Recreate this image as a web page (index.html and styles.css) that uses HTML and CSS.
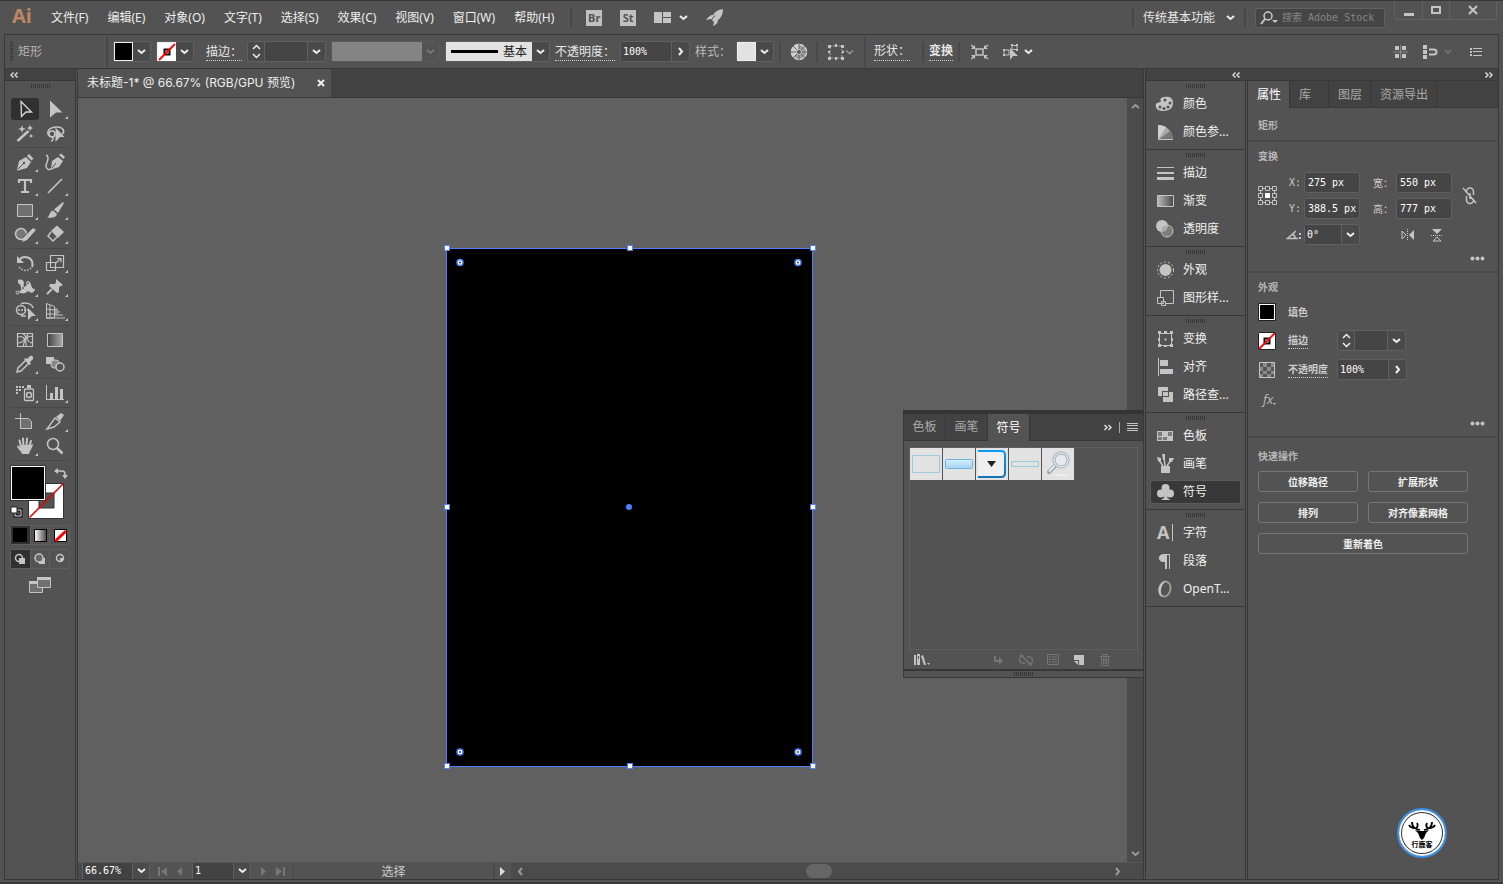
FILE: index.html
```html
<!DOCTYPE html>
<html lang="zh-CN">
<head>
<meta charset="utf-8">
<title>未标题-1* @ 66.67% (RGB/GPU 预览)</title>
<link rel="stylesheet" href="styles.css">
</head>
<body>
<svg class="defs" aria-hidden="true">
  <defs>
    <linearGradient id="g-dark"><stop offset="0" stop-color="#444"/><stop offset="1" stop-color="#aaa"/></linearGradient>
    <linearGradient id="g-light"><stop offset="0" stop-color="#bbb"/><stop offset="1" stop-color="#484848"/></linearGradient>
    <linearGradient id="g-white"><stop offset="0" stop-color="#fff"/><stop offset="1" stop-color="#4a4444"/></linearGradient>
    <linearGradient id="g-blue" x2="0" y2="1"><stop offset="0" stop-color="#d5effc"/><stop offset="1" stop-color="#a3d3f2"/></linearGradient>
    <linearGradient id="g-edge" x2="0" y2="1"><stop offset="0" stop-color="#0a9cf5"/><stop offset="1" stop-color="#1273b5"/></linearGradient>
    <symbol id="chev" viewBox="0 0 9 6"><path d="M1 1l3.500 3L8 1" fill="none" stroke="currentColor" stroke-width="2"/></symbol>
    <symbol id="spin" viewBox="0 0 9 15"><path d="M1 5l3.500-3.500L8 5M1 10l3.500 3.500L8 10" fill="none" stroke="currentColor" stroke-width="1.500"/></symbol>
    <symbol id="right" viewBox="0 0 6 9"><path d="M1 1l3 3.500L1 8" fill="none" stroke="currentColor" stroke-width="2"/></symbol>
    <symbol id="dbl" viewBox="0 0 9 6"><path d="M3.500.5L1 3l2.500 2.500M7.500.5L5 3l2.500 2.500" fill="none" stroke="currentColor" stroke-width="1.500"/></symbol>
    <symbol id="more" viewBox="0 0 3 3"><path d="M3 0v3H0z"/></symbol>
    <symbol id="nofill" viewBox="0 0 18 18"><rect width="18" height="18" fill="#fff"/><rect x="6.500" y="6.500" width="5" height="5" fill="#fff" stroke="#111" stroke-width="2"/><path d="M1 17L17 1" stroke="#f00" stroke-width="1.800"/></symbol>
  </defs>
</svg>

<div class="app">
  <header class="titlebar">
    <span class="logo">Ai</span>
    <nav class="menu">
      <button>文件(F)</button><button>编辑(E)</button><button>对象(O)</button><button>文字(T)</button><button>选择(S)</button><button>效果(C)</button><button>视图(V)</button><button>窗口(W)</button><button>帮助(H)</button>
    </nav>
    <span class="bar"></span>
    <div class="launch">
      <button class="badge">Br</button>
      <button class="badge">St</button>
      <button aria-label="排列文档"><svg width="34" height="14" viewBox="0 0 34 14"><path d="M0 1h8v11H0zM9 1h8v5H9zM9 7h8v5H9z"/><path d="M26 5l3.500 3L33 5" fill="none" stroke="#eee" stroke-width="2"/></svg></button>
      <button aria-label="GPU"><svg width="18" height="18" viewBox="0 0 18 18"><path d="M17 0c-5 .5-8 2.500-10 6C4 6 2 8 0 11l5-1 3 3-1 4c3-1 5-3 5-6 3-2 5-6 5-11z"/><path d="M4 12.500l5-6M1 16l3-3" stroke="#535353" fill="none"/></svg></button>
    </div>
    <div class="title-right">
      <span class="bar"></span>
      <label class="workspace"><select aria-label="工作区"><option>传统基本功能</option></select><svg width="9" height="6"><use href="#chev"/></svg></label>
      <span class="bar"></span>
      <label class="search"><svg width="18" height="14" viewBox="0 0 18 14"><circle cx="8" cy="5" r="4" fill="none" stroke="#ccc" stroke-width="1.500"/><path d="M5 8l-4 5" stroke="#ccc" stroke-width="2"/><path d="M12 9h6l-3 3z"/></svg><input type="text" aria-label="搜索" placeholder="搜索 Adobe Stock"></label>
      <div class="winbtns">
        <button aria-label="最小化"><svg width="12" height="12"><path d="M1 9h10v3H1z"/></svg></button>
        <button aria-label="最大化"><svg width="12" height="12"><path d="M2 3h8v6H2z" fill="none" stroke="#c4c4c4" stroke-width="2"/></svg></button>
        <button aria-label="关闭"><svg width="12" height="12"><path d="M2 2l8 8M10 2l-8 8" stroke="#c4c4c4" stroke-width="2"/></svg></button>
      </div>
    </div>
  </header>

  <section class="control">
    <span class="vgrip"></span>
    <span class="objname">矩形</span>
    <span class="bar tall"></span>
    <div class="combo"><button class="sw black" aria-label="填色"></button><button class="dd" aria-label="填色选项"><svg width="9" height="6"><use href="#chev"/></svg></button></div>
    <div class="combo"><button class="sw" aria-label="描边颜色"><svg width="18" height="18"><use href="#nofill"/></svg></button><button class="dd" aria-label="描边选项"><svg width="9" height="6"><use href="#chev"/></svg></button></div>
    <label class="dotted w-stroke" for="sw">描边：</label>
    <div class="combo"><button class="sp" aria-label="增减"><svg width="9" height="15"><use href="#spin"/></svg></button><input id="sw" class="w43" type="text"><button class="dd" aria-label="粗细"><svg width="9" height="6"><use href="#chev"/></svg></button></div>
    <div class="combo off"><span class="profile"></span><button class="dd" aria-label="配置文件" disabled><svg width="9" height="6"><use href="#chev"/></svg></button></div>
    <div class="combo"><button class="brushdef"><i></i>基本</button><button class="dd" aria-label="画笔定义"><svg width="9" height="6"><use href="#chev"/></svg></button></div>
    <label class="dotted" for="op">不透明度：</label>
    <div class="combo"><input id="op" class="w50" type="text" value="100%"><button class="dd" aria-label="不透明度"><svg width="6" height="9"><use href="#right"/></svg></button></div>
    <span class="plain">样式：</span>
    <div class="combo"><button class="sw light" aria-label="样式"></button><button class="dd" aria-label="样式选项"><svg width="9" height="6"><use href="#chev"/></svg></button></div>
    <span class="bar"></span>
    <button class="cicon w25" aria-label="重新着色"><svg width="18" height="18" viewBox="0 0 18 18"><circle cx="9" cy="9" r="8" fill="#999"/><path d="M9 1a8 8 0 0 0-6 13l6-5z" fill="#d0d0d0"/><g fill="none" stroke="#d0d0d0"><circle cx="9" cy="9" r="7.500" stroke-width="1.500"/><path d="M9 1v16M1 9h16M3 3l12 12M15 3L3 15" stroke="#666"/></g><circle cx="9" cy="9" r="2.500" fill="#555" stroke="#ccc"/></svg></button>
    <span class="bar"></span>
    <button class="cicon w36" aria-label="对齐"><svg width="26" height="16" viewBox="0 0 26 16"><rect x="2" y="2" width="12" height="12" fill="none" stroke="#aaa" stroke-dasharray="2 1"/><path d="M0 1h3v3H0zM7 0h2v3H7zM13 1h3v3h-3zM0 7h2v2H0zM14 7h2v2h-2zM0 13h3v3H0zM7 13h2v3H7zM13 13h3v3h-3z"/><path d="M18 6.500l3.500 3L25 6.500" fill="none" stroke="#999" stroke-width="1.500"/></svg></button>
    <span class="bar tall"></span>
    <button class="dotted w-shape">形状：</button>
    <span class="bar"></span>
    <button class="dotted strong">变换</button>
    <span class="bar"></span>
    <button class="cicon w30" aria-label="隔离"><svg width="18" height="16" viewBox="0 0 18 16"><rect x="5" y="5" width="7" height="6" fill="none" stroke="#c4c4c4" stroke-width="1.500"/><path d="M0 1l4 3M17 1l-4 3M0 15l4-3M17 15l-4-3" stroke="#c4c4c4" stroke-width="1.500"/><path d="M4 1v4H0zM13 1v4h4zM4 15v-4H0zM13 15v-4h4z"/></svg></button>
    <button class="cicon w36" aria-label="选择类似"><svg width="30" height="16" viewBox="0 0 30 16"><path d="M9 1.500h5v4H9zM1 6h5v5H1z" fill="none" stroke="#c4c4c4"/><path d="M7 4v12l3-4h5zM0 5h2v2H0zM0 10h2v2H0zM8 0h2v2H8zM13 0h2v2h-2zM13 5h2v2h-2z"/><path d="M22 6l3.500 3L29 6" fill="none" stroke="#eee" stroke-width="2"/></svg></button>
    <div class="control-right">
      <button aria-label="像素网格"><svg width="16" height="14" viewBox="0 0 16 14"><path d="M2 1h4v4H2zM9 1h4v4H9zM2 9h4v4H2zM9 9h4v4H9z"/><path d="M0 7h15M7.500 0v14" stroke="#888"/></svg></button>
      <button aria-label="对齐像素"><svg width="33" height="14" viewBox="0 0 33 14"><path d="M0 0h4v4H0zM0 5h4v4H0zM0 10h4v4H0z"/><path d="M6 4.500h5a2.500 2.500 0 0 1 0 5H6" fill="none" stroke="#c4c4c4" stroke-width="2"/><path d="M22 5l3 3 3-3" fill="none" stroke="#777" stroke-width="1.500"/></svg></button>
      <button aria-label="菜单"><svg width="12" height="10" viewBox="0 0 12 10"><path d="M0 1h2v2H0zM0 4h2v2H0zM0 7h2v2H0zM3 1h9v1H3zM3 4h9v1H3zM3 8h9v1H3z"/></svg></button>
    </div>
  </section>

  <main class="work">
    <aside class="tools">
      <button class="strip left" aria-label="折叠"><svg width="9" height="6"><use href="#dbl"/></svg></button>
      <div class="griprow"><span class="grip"></span></div>
      <div class="tgroup">
        <button class="on" aria-label="选择工具"><svg viewBox="0 0 30 24"><path d="M11 4.500L21.500 15h-5.500l-4.500 4.500z" fill="none" stroke="#d8d8d8" stroke-width="1.300"/></svg></button>
        <button aria-label="直接选择"><svg viewBox="0 0 30 24"><path d="M10 3.500L22.500 15.500H16l-6 5z"/><use href="#more" x="25" y="19" width="3" height="3"/></svg></button>
        <button aria-label="魔棒"><svg viewBox="0 0 30 24"><path d="M7.500 20L18.500 10" stroke="#c4c4c4" stroke-width="2.500"/><path d="M12 4l1 3 3 1-3 1-1 3-1-3-3-1 3-1zM20 4l1 2 2 1-2 1-1 2-1-2-2-1 2-1zM21 13l1 1.500 2 .5-2 .5-1 1.500-1-1.500-1-.5 1-.5z"/></svg></button>
        <button aria-label="套索"><svg viewBox="0 0 30 24"><g fill="none" stroke="#c4c4c4" stroke-width="1.600"><path d="M12 16c-6-2-6-9 4-10 8-.5 9 5 6 7"/><circle cx="12" cy="13" r="3"/><path d="M12 16c2 1 1 4-1 4"/></g><path d="M15.500 6.500l9 9.500H20l-4.500 5z"/></svg></button>
      </div>
      <div class="tgroup">
        <button aria-label="钢笔"><svg viewBox="0 0 30 24"><path d="M7 20l2-9 7-4 5 5-4 6-9 2.500zM17 6l2-2 4.500 4.500-2 2z"/><path d="M8 19l5-5" stroke="#535353"/><circle cx="14" cy="13" r="1.200" fill="#535353"/><use href="#more" x="25" y="19" width="3" height="3"/></svg></button>
        <button aria-label="曲率"><svg viewBox="0 0 30 24"><path d="M6 5c5 2 0 8 0 11s3 5 7 2" fill="none" stroke="#c4c4c4" stroke-width="1.500"/><path d="M11 19l1-8 6-4 5 4-4 6-8 2.500zM19 5l2-1.500L25 7l-1.500 2z"/><path d="M12 18l4-5" stroke="#535353"/></svg></button>
        <button aria-label="文字工具"><svg viewBox="0 0 30 24"><path d="M9 9V6h12v3M15 6v12M11 18h8" fill="none" stroke="#c4c4c4" stroke-width="2.200"/><use href="#more" x="25" y="19" width="3" height="3"/></svg></button>
        <button aria-label="直线"><svg viewBox="0 0 30 24"><path d="M8 19L22 5" stroke="#c4c4c4" stroke-width="1.600"/><use href="#more" x="25" y="19" width="3" height="3"/></svg></button>
        <button aria-label="矩形工具"><svg viewBox="0 0 30 24"><path d="M7.500 6.500h15v12h-15z" fill="#707070" stroke="#c4c4c4"/><use href="#more" x="25" y="19" width="3" height="3"/></svg></button>
        <button aria-label="画笔工具"><svg viewBox="0 0 30 24"><path d="M23 4l1 1-6 10-4-3.500zM13 12.500l4 3.500c-1 4-6 4-10 3.500 3-1 2-6 6-7z"/><use href="#more" x="25" y="19" width="3" height="3"/></svg></button>
        <button aria-label="铅笔"><svg viewBox="0 0 30 24"><circle cx="11" cy="12" r="5.500" fill="#777" stroke="#c4c4c4" stroke-width="1.500"/><path d="M25 7L15 17" stroke="#535353" stroke-width="6"/><path d="M23 6l3 2-9 10-5 2 2-5z"/><use href="#more" x="25" y="19" width="3" height="3"/></svg></button>
        <button aria-label="橡皮擦"><svg viewBox="0 0 30 24"><path d="M17 3.500l7 6.500-6 6-7-7z"/><path d="M11 10l-3 4 5 5 4-4" fill="none" stroke="#c4c4c4" stroke-width="1.500"/><use href="#more" x="25" y="19" width="3" height="3"/></svg></button>
      </div>
      <div class="tgroup">
        <button aria-label="旋转"><svg viewBox="0 0 30 24"><path d="M10 8c4-4 13-2 12.500 6q0 1-.5 2" fill="none" stroke="#c4c4c4" stroke-width="2"/><path d="M7 5v7h7z"/><path d="M21 17c-3 3-9 4-12.500-2" fill="none" stroke="#c4c4c4" stroke-width="1.500" stroke-dasharray="1.500 1.500"/><use href="#more" x="25" y="19" width="3" height="3"/></svg></button>
        <button aria-label="比例缩放"><svg viewBox="0 0 30 24"><path d="M10.500 4.500h13v12h-13zM6.500 11.500h9v8h-9zM16 12l4-4M17 7.500h4v4" fill="none" stroke="#c4c4c4" stroke-width="1.200"/><use href="#more" x="25" y="19" width="3" height="3"/></svg></button>
        <button aria-label="宽度"><svg viewBox="0 0 30 24"><path d="M8 5c6-2 7 3 5 7 4 0 4-5 6-5 3 0 1 7 6 7-1 6-6 3-7 2-2 3-7 3-9 1 4-4 2-7-1-9z"/><path d="M8 17l10-9" stroke="#535353"/><g fill="#535353" stroke="#d0d0d0"><circle cx="7.500" cy="17.500" r="1.500"/><circle cx="13" cy="13" r="1.500"/><circle cx="18" cy="8" r="1.500"/></g><use href="#more" x="25" y="19" width="3" height="3"/></svg></button>
        <button aria-label="操控变形"><svg viewBox="0 0 30 24"><path d="M16 4l7 6-2 1-2 1v5l-2 1-8-7 1-2h5l1-2z"/><path d="M12 14l-5 5" stroke="#c4c4c4" stroke-width="2"/><use href="#more" x="25" y="19" width="3" height="3"/></svg></button>
        <button aria-label="形状生成器"><svg viewBox="0 0 30 24"><g fill="none" stroke="#c4c4c4" stroke-width="1.500"><circle cx="11" cy="11" r="4.500"/><path d="M11 5c3-2 11-1 12 4M11 17h5"/><path d="M8 11h10" stroke-dasharray="2 1"/></g><path d="M18 9l8 8h-4l-4 4z"/><use href="#more" x="25" y="19" width="3" height="3"/></svg></button>
        <button aria-label="透视网格"><svg viewBox="0 0 30 24"><path d="M6.500 4.500l8 3v11l-8 1zM10 6v13M6 10l8 1M6 15h8M14 10h3M14 13h6M14 16h9M7 19h18" fill="none" stroke="#c4c4c4"/><path d="M15 9l3 1v7h-3z" fill="#999"/><use href="#more" x="25" y="19" width="3" height="3"/></svg></button>
      </div>
      <div class="tgroup">
        <button aria-label="网格"><svg viewBox="0 0 30 24"><path d="M7.500 5.500h15v13h-15zM8 9c5-2 9 3 8 10M13 6c6 2 0 9-5 9M22 8c-5 0-8 4-9 11M18 6c-3 5 0 8 4 9" fill="none" stroke="#c4c4c4" stroke-width="1.200"/></svg></button>
        <button aria-label="渐变工具"><svg viewBox="0 0 30 24"><path d="M7.500 5.500h15v13h-15z" fill="url(#g-dark)" stroke="#c4c4c4"/></svg></button>
        <button aria-label="吸管"><svg viewBox="0 0 30 24"><path d="M16 8l-8 8-1 4 4-1 8-8" fill="none" stroke="#c4c4c4" stroke-width="1.500"/><path d="M14 7l2-1 1 1 3-3c2-1 4 1 3 3l-3 3 1 2-2 1z"/><use href="#more" x="25" y="19" width="3" height="3"/></svg></button>
        <button aria-label="混合"><svg viewBox="0 0 30 24"><path d="M6 5h8v7H6z"/><rect x="11" y="8" width="8" height="8" rx="3" fill="#888" stroke="#c4c4c4"/><circle cx="20" cy="15" r="4" fill="#535353" stroke="#c4c4c4" stroke-width="1.500"/></svg></button>
      </div>
      <div class="tgroup">
        <button aria-label="符号喷枪"><svg viewBox="0 0 30 24"><path d="M6 5h2v2H6zM9 5h2v2H9zM12 5h2v2h-2zM6 8h2v2H6zM9 8h2v2H9zM6 11h2v2H6zM17 4h4v3h-4z"/><rect x="14.500" y="8" width="9" height="11.500" rx="1" fill="none" stroke="#c4c4c4" stroke-width="1.300"/><circle cx="19" cy="14" r="2.500" fill="none" stroke="#c4c4c4" stroke-width="1.500"/><use href="#more" x="25" y="19" width="3" height="3"/></svg></button>
        <button aria-label="柱形图"><svg viewBox="0 0 30 24"><path d="M6 4h1v14h17v1H6zM10 12h3v6h-3zM15 6h3v12h-3zM20 8h3v10h-3z"/><use href="#more" x="25" y="19" width="3" height="3"/></svg></button>
      </div>
      <div class="tgroup">
        <button aria-label="画板"><svg viewBox="0 0 30 24"><path d="M10.500 3v6M5 8.500h5" stroke="#c4c4c4"/><path d="M10.500 8.500h8l3 3v7h-11z" fill="#707070" stroke="#c4c4c4"/></svg></button>
        <button aria-label="切片"><svg viewBox="0 0 30 24"><path d="M7 19l8-11 5 4-6 5z" fill="none" stroke="#c4c4c4" stroke-width="1.400"/><path d="M16 7l5-4 3 2-4 6z"/><use href="#more" x="25" y="19" width="3" height="3"/></svg></button>
        <button aria-label="抓手"><svg viewBox="0 0 30 24"><path d="M12 20c-1-3-5-6-5-8 1-1 2 0 4 2" /><path d="M11 13L9.500 6.500M13.500 12L13 4.500M16.500 12l.5-7.500M19 13l2-6" stroke="#c4c4c4" stroke-width="2" stroke-linecap="round"/><path d="M10 11h10l3-1c0 3-3 6-4 10h-7z"/><use href="#more" x="25" y="19" width="3" height="3"/></svg></button>
        <button aria-label="缩放"><svg viewBox="0 0 30 24"><circle cx="13" cy="10" r="5.500" fill="none" stroke="#c4c4c4" stroke-width="1.500"/><path d="M17 14l5.500 5.500" stroke="#c4c4c4" stroke-width="2.500"/></svg></button>
      </div>
      <div class="paint">
        <svg width="60" height="60" viewBox="0 0 60 60" role="img" aria-label="填色和描边"><path d="M18.500 22.500h35v35h-35z" fill="#fff" stroke="#333"/><path d="M29 32h15v15H29z" fill="#535353" stroke="#333"/><path d="M19.500 56.500l34-34" stroke="#e00000" stroke-width="1.500"/><path d="M.5 4.500h35v35H.5z" fill="#fff" stroke="#333"/><path d="M2 6h32v32H2z" fill="#000"/><path d="M47 10h5q3 0 3 3v2" fill="none" stroke="#c4c4c4" stroke-width="1.500"/><path d="M48 7v6l-4-3zM52 14h6l-3 4z"/><path d="M5 49h6v6H5z" fill="none" stroke="#111" stroke-width="3"/><path d="M5 49h6v6H5z" fill="none" stroke="#ddd"/><path d="M1 46h6v6H1z" fill="#fff" stroke="#222"/></svg>
      </div>
      <div class="trio">
        <button class="on" aria-label="颜色"><svg width="16" height="16"><path d="M1 1h14v14H1z" fill="#000"/></svg></button>
        <button aria-label="渐变"><svg width="16" height="16"><path d="M2.500 2.500h12v12h-12z" fill="url(#g-white)" stroke="#000"/></svg></button>
        <button aria-label="无"><svg width="16" height="16"><path d="M2.500 2.500h12v12h-12z" fill="#fff" stroke="#000"/><path d="M3.500 14l10.500-10" stroke="#f00" stroke-width="3"/></svg></button>
      </div>
      <div class="trio">
        <button class="on" aria-label="正常绘图"><svg width="12" height="12"><circle cx="5" cy="5" r="3.500" fill="none" stroke="#c4c4c4" stroke-width="1.500"/><path d="M5 5h6v6H5z"/></svg></button>
        <button aria-label="背面绘图"><svg width="12" height="12"><path d="M5 5h6v6H5z"/><circle cx="5" cy="5" r="4" fill="#666" stroke="#c4c4c4" stroke-width="1.500"/></svg></button>
        <button aria-label="内部绘图"><svg width="12" height="12"><circle cx="6" cy="5" r="3.500" fill="none" stroke="#c4c4c4" stroke-width="1.500"/><path d="M6 5h3v3H6z"/></svg></button>
      </div>
      <button class="screen" aria-label="屏幕模式"><svg width="22" height="16" viewBox="0 0 22 16"><path d="M.5 4.500h13v11H.5z" fill="#707070" stroke="#c4c4c4"/><path d="M0 4h14v3H0z"/><path d="M8.500.5h13v10h-13z" fill="#707070" stroke="#c4c4c4"/><path d="M8 0h14v3H8z"/></svg></button>
    </aside>

    <section class="doc">
      <div class="doctabs"><div class="doctab"><span>未标题-1* @ 66.67% (RGB/GPU 预览)</span><button aria-label="关闭文档"><svg width="8" height="8"><path d="M1 1l6 6M7 1L1 7" stroke="#eee" stroke-width="2"/></svg></button></div></div>
      <div class="stage">
        <div class="canvas">
          <svg class="artboard" width="374" height="526" viewBox="0 0 374 526" role="img" aria-label="画板">
            <path d="M3.500 4.500h366v518h-366z" fill="#000" stroke="#4f80ff"/>
            <g fill="#fff" stroke="#4f80ff"><path d="M1.500 1.500h5v5h-5zM184.500 1.500h5v5h-5zM367.500 1.500h5v5h-5zM1.500 260.500h5v5h-5zM367.500 260.500h5v5h-5zM1.500 519.500h5v5h-5zM184.500 519.500h5v5h-5zM367.500 519.500h5v5h-5z"/>
            <g stroke-width="1.500"><circle cx="17" cy="18.500" r="3"/><circle cx="355" cy="18.500" r="3"/><circle cx="17" cy="508" r="3"/><circle cx="355" cy="508" r="3"/></g></g>
            <g fill="#223c88"><circle cx="17" cy="18.500" r="1"/><circle cx="355" cy="18.500" r="1"/><circle cx="17" cy="508" r="1"/><circle cx="355" cy="508" r="1"/></g>
            <circle cx="186" cy="263" r="3" fill="#4f80ff"/>
          </svg>
        </div>
        <div class="vscroll"><svg width="9" height="6" class="flip"><use href="#chev"/></svg><svg width="9" height="6"><use href="#chev"/></svg></div>
      </div>
      <footer class="status">
        <input class="zoomin" type="text" value="66.67%" aria-label="缩放比例"><button class="sdd" aria-label="缩放列表"><svg width="9" height="6"><use href="#chev"/></svg></button>
        <div class="nav dim"><svg width="9" height="9"><path d="M0 0h2v9H0zM9 0v9L3 4.500z"/></svg><svg width="9" height="9"><path d="M7 0v9L2 4.500z"/></svg></div>
        <input class="pagein" type="text" value="1" aria-label="画板导航"><button class="sdd" aria-label="画板列表"><svg width="9" height="6"><use href="#chev"/></svg></button>
        <div class="nav dim"><svg width="9" height="9"><path d="M2 0v9l5-4.500z"/></svg><svg width="9" height="9"><path d="M7 0h2v9H7zM0 0v9l6-4.500z"/></svg></div>
        <span class="stool">选择</span>
        <button class="splay" aria-label="状态菜单"><svg width="6" height="9"><path d="M0 0v9l5-4.500z" fill="#ddd"/></svg></button>
        <div class="hscroll"><svg width="6" height="9" class="mirror"><use href="#right"/></svg><i></i><svg width="6" height="9"><use href="#right"/></svg></div>
      </footer>

      <section class="symbols">
        <div class="symtabs">
          <button>色板</button><button>画笔</button><button class="on">符号</button>
          <span class="symctl"><svg width="9" height="7" class="mirror"><use href="#dbl"/></svg><i></i><svg width="11" height="9"><path d="M0 0h11v1H0zM0 2h11v1H0zM0 5h11v1H0zM0 7h11v1H0z"/></svg></span>
        </div>
        <div class="symlist">
          <button aria-label="符号 1"><svg viewBox="0 0 32 32"><path d="M2.500 7.500h27v17h-27z" fill="none" stroke="#9cc9e0"/></svg></button>
          <button aria-label="符号 2"><svg viewBox="0 0 32 32"><rect x="2.500" y="11.500" width="27" height="9" rx="1" fill="url(#g-blue)" stroke="#6fb3dd"/></svg></button>
          <button aria-label="符号 3"><svg viewBox="0 0 32 32"><path d="M2 3h23q4 0 4 4v18q0 4-4 4H2" fill="#efefef" stroke="url(#g-edge)" stroke-width="2"/><path d="M11 13h9l-4.500 6z" fill="#222"/></svg></button>
          <button aria-label="符号 4"><svg viewBox="0 0 32 32"><path d="M2.500 13.500h27v5h-27z" fill="none" stroke="#9cc9e0"/></svg></button>
          <button aria-label="符号 5"><svg viewBox="0 0 32 32"><ellipse cx="19" cy="27" rx="9" ry="1" fill="#eee"/><path d="M7 24l7-7" stroke="#98a6b4" stroke-width="4" stroke-linecap="round"/><path d="M7 23.500l6-6" stroke="#e6edf2" stroke-width="2"/><circle cx="19" cy="12" r="7" fill="#e7eaec" stroke="#98a6b4" stroke-width="3"/><circle cx="19" cy="12" r="7" fill="none" stroke="#dde5ea" stroke-width="1.500"/></svg></button>
        </div>
        <div class="symfoot">
          <button aria-label="符号库"><svg width="16" height="12"><path d="M0 1h2v10H0zM3 0h3v11H3z"/><path d="M4 2h1v3H4z" fill="#535353"/><path d="M7 2l2-1 3 10h-2zM13 9h3l-1.500 2z"/></svg></button>
          <div class="symacts">
            <button aria-label="置入"><svg width="12" height="12"><path d="M2 2v5h5" fill="none" stroke="#757575" stroke-width="2"/><path d="M6 3v8l4-4z" fill="#757575"/></svg></button>
            <button aria-label="断开链接"><svg width="14" height="12"><path d="M5 2H4a3.500 3.500 0 0 0 0 7h2M8 3h2a3.500 3.500 0 0 1 0 7H9M1 0l12 12" fill="none" stroke="#757575" stroke-width="1.500"/></svg></button>
            <button aria-label="符号选项"><svg width="12" height="12"><path d="M.5.500h11v10H.5zM2 3h2M5 3h5M2 5.500h2M5 5.500h5M2 8h2M5 8h5" fill="none" stroke="#757575"/></svg></button>
            <button aria-label="新建符号"><svg width="12" height="12"><path d="M1 1h10v10H6V6H1z"/><path d="M1 7h4v4z"/></svg></button>
            <button aria-label="删除"><svg width="12" height="12"><path d="M1 2.500h10M4 2V.5h4V2M2.500 3v8.500h7V3M4.500 4v6M6 4v6M7.500 4v6" fill="none" stroke="#757575"/></svg></button>
          </div>
        </div>
        <div class="symgrip"><span class="grip"></span></div>
      </section>
    </section>

    <aside class="right">
      <div class="strips"><button class="strip dockstrip" aria-label="展开面板"><svg width="9" height="6"><use href="#dbl"/></svg></button><button class="strip propstrip" aria-label="折叠面板"><svg width="9" height="6" class="mirror"><use href="#dbl"/></svg></button></div>
      <div class="panes">
        <div class="dock">
          <div class="dgroup"><span class="grip"></span>
            <button><svg viewBox="0 0 20 20"><path d="M10 3c3-1 8 0 8 6 0 7-6 8-11 8s-7-4-6-7c1-2 5-1 5-3-2-2 1-4 4-4z"/><g fill="#535353"><circle cx="5" cy="13" r="1.500"/><circle cx="9" cy="14.500" r="1.500"/><circle cx="13" cy="13" r="1.500"/><circle cx="15" cy="9" r="1.500"/><circle cx="10" cy="6" r="1.500"/></g></svg>颜色</button>
            <button><svg viewBox="0 0 20 20"><path d="M3 3c8 0 15 6 15 15H3z" fill="#aaa"/><path d="M3 3c3 0 6 1 8 2L3 18z" fill="#d0d0d0"/><path d="M3 18l12-9c2 3 3 6 3 9z" fill="#777"/><path d="M3 17.500h15" stroke="#c4c4c4"/></svg>颜色参...</button></div>
          <div class="dgroup"><span class="grip"></span>
            <button><svg viewBox="0 0 20 20"><path d="M2 4h17v1H2zM2 9h17v2H2zM2 14h17v3H2z"/></svg>描边</button>
            <button><svg viewBox="0 0 20 20"><path d="M2.500 4.500h16v11h-16z" fill="url(#g-light)" stroke="#c4c4c4"/></svg>渐变</button>
            <button><svg viewBox="0 0 20 20"><circle cx="7" cy="7" r="6"/><circle cx="12" cy="12" r="6" fill="#999" fill-opacity=".6" stroke="#c4c4c4"/></svg>透明度</button></div>
          <div class="dgroup"><span class="grip"></span>
            <button><svg viewBox="0 0 20 20"><circle cx="10.500" cy="10" r="6"/><circle cx="10.500" cy="10" r="8" fill="none" stroke="#c4c4c4" stroke-dasharray="2 2"/></svg>外观</button>
            <button><svg viewBox="0 0 20 20"><path d="M5.500 9V2.500h13v13H11" fill="none" stroke="#c4c4c4"/><path d="M2.500 9.500h6v6h-6zM6.500 13.500h4v4h-4z" fill="#535353" stroke="#c4c4c4"/></svg>图形样...</button></div>
          <div class="dgroup"><span class="grip"></span>
            <button><svg viewBox="0 0 20 20"><path d="M4.500 4.500h12v12h-12z" fill="none" stroke="#c4c4c4"/><path d="M3 2h3v3H3zM9 2h3v3H9zM15 2h3v3h-3zM3 9h2v3H3zM16 9h2v3h-2zM3 15h3v3H3zM9 16h3v2H9zM15 15h3v3h-3zM9.500 9.500h2v2h-2z"/></svg>变换</button>
            <button><svg viewBox="0 0 20 20"><path d="M3 1h1v18H3zM5 3h8v6H5zM5 12h13v5H5z"/></svg>对齐</button>
            <button><svg viewBox="0 0 20 20"><path d="M3 2h10v4H7v5H3zM14 7h4v10H8v-5h6z"/><path d="M8 7h5v4H8z"/></svg>路径查...</button></div>
          <div class="dgroup"><span class="grip"></span>
            <button><svg viewBox="0 0 20 20"><path d="M2 5h16v10H2z"/><path d="M3 6h4v4H3zM13 6h4v4h-4zM3 11h4v3H3zM8 11h4v3H8z" fill="#7c7c7c"/></svg>色板</button>
            <button><svg viewBox="0 0 20 20"><path d="M6 12h9v7H6z"/><path d="M8 12L4 6M10 12L9 3M12 12l4-6" stroke="#c4c4c4" stroke-width="1.500"/><path d="M2 3l4 1v4L3 7zM7 0h3v6H8zM14 4h5l-2 4h-3z"/></svg>画笔</button>
            <button class="on"><svg viewBox="0 0 20 20"><circle cx="10.500" cy="6" r="4"/><circle cx="6" cy="11.500" r="4"/><circle cx="15" cy="11.500" r="4"/><path d="M9.500 8h2l1 8 3 2H6l3-2z"/></svg>符号</button></div>
          <div class="dgroup"><span class="grip"></span>
            <button><svg viewBox="0 0 20 20"><text x="2" y="16" class="gA">A</text><path d="M17 1h1v17h-1z"/></svg>字符</button>
            <button><svg viewBox="0 0 20 20"><path d="M9 3h6v15h-1V4h-2v14h-2v-7C2 12 2 3 9 3z"/></svg>段落</button>
            <button><svg viewBox="0 0 20 20"><ellipse cx="10" cy="10" rx="5.500" ry="7.500" transform="rotate(12 10 10)" fill="none" stroke="#999" stroke-width="2"/><path d="M11 2C2 3 1 17 8 18c-4-3-2-13 3-16z"/></svg>OpenT...</button></div>
        </div>
        <div class="props">
          <div class="ptabs"><button class="on">属性</button><button>库</button><button>图层</button><button>资源导出</button></div>
          <section class="psec objtype"><h2>矩形</h2></section>
          <section class="psec xform">
            <h2>变换</h2>
            <div class="xgrid">
              <svg class="refpt" width="20" height="20" viewBox="0 0 20 20"><g fill="none" stroke="#c4c4c4"><path d="M.5.500h4v4h-4zM7.500.500h4v4h-4zM14.500.500h4v4h-4zM.5 7.500h4v4h-4zM14.500 7.500h4v4h-4zM.5 14.500h4v4h-4zM7.500 14.500h4v4h-4zM14.500 14.500h4v4h-4zM5 2.500h2M12 2.500h2M5 16.500h2M12 16.500h2M2.500 5v2M2.500 12v2M16.500 5v2M16.500 12v2"/></g><path d="M7 7h5v5H7z" fill="#fff"/></svg>
              <label class="mono" for="fx">X:</label><input id="fx" type="text" value="275 px">
              <label for="fw">宽：</label><input id="fw" type="text" value="550 px">
              <svg class="link" width="16" height="18" viewBox="0 0 16 18"><path d="M4.500 6V4.500a3.500 3.500 0 0 1 7 0V8M4.500 9v4a3.500 3.500 0 0 0 7 0v-1M8 6v6M1 1l13 15" fill="none" stroke="#c4c4c4" stroke-width="1.500"/></svg>
              <label class="mono" for="fy">Y:</label><input id="fy" type="text" value="388.5 px">
              <label for="fh">高：</label><input id="fh" type="text" value="777 px">
              <label for="fa" aria-label="旋转"><svg width="15" height="10"><path d="M10 1L1.500 8.500H12M6 4q3 1 3 4" fill="none" stroke="#c4c4c4" stroke-width="1.500"/><path d="M13 3h2v2h-2zM13 7h2v2h-2z"/></svg></label>
              <div class="combo angle"><input id="fa" type="text" value="0°"><button class="dd" aria-label="角度"><svg width="9" height="6"><use href="#chev"/></svg></button></div>
              <div class="flips"><button aria-label="水平翻转"><svg width="14" height="12"><path d="M1 2v8l4-4z" fill="none" stroke="#c4c4c4"/><path d="M13 1v10L8 6z"/><path d="M6.500 0v12" stroke="#c4c4c4" stroke-dasharray="1 1"/></svg></button><button aria-label="垂直翻转"><svg width="12" height="14"><path d="M2 13h8L6 9z" fill="none" stroke="#c4c4c4"/><path d="M1 1h10L6 6z"/><path d="M0 7.500h12" stroke="#c4c4c4" stroke-dasharray="1 1"/></svg></button></div>
            </div>
            <button class="dots" aria-label="更多选项"><svg width="15" height="5"><circle cx="2.500" cy="2.500" r="2"/><circle cx="7.500" cy="2.500" r="2"/><circle cx="12.500" cy="2.500" r="2"/></svg></button>
          </section>
          <section class="psec look">
            <h2>外观</h2>
            <div class="lrow"><button class="psw" aria-label="填色"><svg width="18" height="18"><path d="M.5.500h17v17H.5z" fill="#fff" stroke="#222"/><path d="M2 2h14v14H2z" fill="#000"/></svg></button><span>填色</span></div>
            <div class="lrow"><button class="psw" aria-label="描边"><svg width="18" height="18"><use href="#nofill"/><path d="M.5.500h17v17H.5z" fill="none" stroke="#222"/></svg></button><label class="dotted" for="ps">描边</label><div class="combo"><button class="sp" aria-label="增减"><svg width="9" height="15"><use href="#spin"/></svg></button><input id="ps" class="w32" type="text"><button class="dd" aria-label="粗细"><svg width="9" height="6"><use href="#chev"/></svg></button></div></div>
            <div class="lrow"><svg class="psw" width="18" height="18" viewBox="0 0 18 18"><path d="M1.500 1.500h15v15h-15z" fill="#555" stroke="#c4c4c4"/><path d="M5 2h4v4H5zM13 2h3v4h-3zM2 6h3v4H2zM9 6h4v4H9zM5 10h4v3H5zM13 10h3v3h-3zM2 13h3v3H2zM9 13h4v3H9z" fill="#8c8c8c"/></svg><label class="dotted" for="po">不透明度</label><div class="combo"><input id="po" class="w50" type="text" value="100%"><button class="dd" aria-label="不透明度"><svg width="6" height="9"><use href="#right"/></svg></button></div></div>
            <div class="lrow"><button class="fx">fx<svg width="3" height="2"><path d="M0 0h3L1.500 2z"/></svg></button></div>
            <button class="dots" aria-label="更多选项"><svg width="15" height="5"><circle cx="2.500" cy="2.500" r="2"/><circle cx="7.500" cy="2.500" r="2"/><circle cx="12.500" cy="2.500" r="2"/></svg></button>
          </section>
          <section class="psec quick">
            <h2>快速操作</h2>
            <div class="qgrid"><button>位移路径</button><button>扩展形状</button><button>排列</button><button>对齐像素网格</button><button class="wide">重新着色</button></div>
          </section>
        </div>
      </div>
    </aside>
  </main>
  <div class="deer"><svg width="30" height="21" viewBox="0 0 30 21"><g fill="none" stroke="#000" stroke-width="1.800"><path d="M13 11C9 10 5 9 5 3M8 9C6 9 3 8 2 6M9 9c2-1 2-3 1-5M17 11c4-1 8-2 8-8M22 9c2 0 5-1 6-3M21 9c-2-1-2-3-1-5"/></g><path d="M8 11l5 1h4l5-1-3 3-2 5-2 2-2-2-2-5z" fill="#000"/></svg><span>行鹿客</span></div>
</div>
</body>
</html>
```

FILE: styles.css
```css
* { box-sizing: border-box; }
body {
  margin: 0;
  background: #535353;
  color: #e6e6e6;
  font: 12px/18px "Noto Sans", "Noto Sans CJK SC", sans-serif;
}
button, input, select {
  margin: 0;
  padding: 0;
  border: 0;
  background: none;
  color: inherit;
  font: inherit;
  white-space: nowrap;
}
button { display: flex; align-items: center; justify-content: center; }
input { min-width: 0; }
svg { display: block; flex: none; fill: #c4c4c4; }
h2 { margin: 0; font: inherit; }
.defs { position: absolute; width: 0; height: 0; }
.mirror { transform: scaleX(-1); }
.flip { transform: scaleY(-1); }

.app { display: flex; flex-direction: column; height: 100vh; border-top: 1px solid #383838; border-bottom: 2px solid #3a3a3a; }

/* title bar */
.titlebar { display: flex; flex: none; align-items: center; height: 33px; padding-left: 12px; }
.logo { width: 39px; padding-bottom: 4px; color: #bd8662; font: bold 20px/28px "Noto Sans", sans-serif; }
.menu { display: flex; gap: 19px; color: #eee; }
.bar { flex: none; width: 2px; height: 20px; background: #494949; }
.menu + .bar { margin: 0 14px 0 16px; }
.launch { display: flex; align-items: center; gap: 18px; }
.badge { width: 16px; height: 16px; background: #c0c0c0; color: #535353; font-weight: bold; font-size: 11px; line-height: 16px; }
.title-right { display: flex; align-items: center; gap: 9px; height: 100%; margin-left: auto; padding-right: 6px; }
.workspace { display: flex; align-items: center; width: 92px; }
.workspace select { flex: 1; appearance: none; outline: none; }
.workspace svg { color: #eee; }
.search { display: flex; align-items: center; gap: 4px; width: 130px; height: 20px; padding: 0 4px; border: 1px solid #606060; border-radius: 3px; background: #454545; }
.search input { flex: 1; font: 10px/14px "DejaVu Sans Mono", "Noto Sans CJK SC", monospace; }
.search input::placeholder { color: #858585; opacity: 1; }
.winbtns { display: flex; align-self: flex-start; height: 19px; border: 1px solid #626262; border-top: 0; border-radius: 0 0 3px 3px; }
.winbtns button { width: 27px; }
.winbtns button + button { border-left: 1px solid #626262; }
.winbtns button:last-child { width: 47px; }

/* control bar */
.control { display: flex; flex: none; align-items: center; gap: 5px; height: 35px; margin: 0 4px; padding-left: 5px; border: 1px solid #383838; }
.vgrip { width: 3px; height: 19px; background: repeating-linear-gradient(#383838 0 1px, transparent 1px 2px); }
.objname { width: 83px; color: #b4b4b4; }
.bar.tall { height: 30px; }
.combo { display: flex; flex: none; height: 21px; border: 1px solid #606060; border-radius: 3px; background: #4a4a4a; }
.combo input { padding: 0 2px; border-right: 1px solid #606060; background: #454545; color: #fff; font: 10px/14px "DejaVu Sans Mono", monospace; outline: none; }
.dd { width: 17px; color: #eee; }
.sp { width: 17px; border-right: 1px solid #606060; color: #eee; }
.w43 { width: 43px; }
.w50 { width: 51px; }
.w32 { width: 33px; }
.sw { width: 19px; border: 1px solid #eee; background: #fff; }
.sw.black { background: #000; }
.sw.light { background: #e2e2e2; }
.off { border-color: #5a5a5a; background: #535353; }
.off .dd { color: #777; }
.profile { width: 90px; background: #848484; }
.brushdef { width: 86px; gap: 5px; background: #e2e2e2; color: #222; }
.brushdef i { width: 47px; height: 3px; background: #000; }
.dotted { flex: none; height: 16px; border-bottom: 1px dotted #ccc; line-height: 15px; white-space: nowrap; }
.control .dotted { height: 18px; line-height: 18px; }
.strong { font-weight: bold; }
.w-stroke { margin-left: 7px; }
.w-shape { margin: 0 7px 0 3px; }
.plain { flex: none; color: #bbb; white-space: nowrap; }
.cicon { flex: none; }
.w25 { width: 25px; }
.w36 { width: 36px; }
.w30 { width: 30px; }
.control-right { display: flex; align-items: center; gap: 14px; margin: 0 16px 0 auto; }

/* work area */
.work { display: flex; flex: 1; min-height: 0; margin: 0 4px 2px; border: 1px solid #383838; border-top: 0; }
.strip { width: 100%; height: 12px; padding: 0 9px; border-bottom: 1px solid #383838; background: #424242; color: #d8d8d8; justify-content: flex-end; }
.strip.left { padding: 0 5px; justify-content: flex-start; }
.grip { display: block; width: 19px; height: 4px; background: repeating-linear-gradient(90deg, #383838 0 1px, transparent 1px 2px); }

.tools { display: flex; flex-direction: column; flex: none; width: 73px; border-right: 3px double #383838; }
.griprow { display: flex; justify-content: center; height: 16px; padding-top: 3px; }
.tgroup { display: grid; grid-template-columns: 30px 30px; grid-auto-rows: 24px; margin: 0 5px 2px; }
.tgroup + .tgroup, .paint { border-top: 1px solid #484848; }
.tgroup + .tgroup { padding-top: 2px; }
.tgroup svg { width: 30px; height: 24px; }
.tgroup .on { margin: 1px; border-radius: 3px; background: #303030; }
.paint { margin: 0 5px; padding-bottom: 4px; }
.trio { display: flex; width: 60px; height: 20px; margin: 0 5px 4px; border: 1px solid #5f5f5f; border-radius: 3px; }
.trio button { flex: 1; }
.trio button + button { border-left: 1px solid #5f5f5f; }
.trio .on { background: #303030; }
.screen { margin-top: 4px; }

/* document */
.doc { position: relative; display: flex; flex: 1; flex-direction: column; min-width: 0; }
.doctabs { display: flex; flex: none; height: 29px; border-bottom: 1px solid #383838; background: #424242; }
.doctab { display: flex; align-items: center; justify-content: space-between; width: 253px; padding: 0 6px 0 9px; background: #535353; color: #eee; font-family: Inter, "Noto Sans CJK SC", sans-serif; white-space: nowrap; }
.stage { display: flex; flex: 1; min-height: 0; }
.canvas { position: relative; flex: 1; overflow: hidden; background: #606060; }
.artboard { position: absolute; left: 365px; top: 146px; }
.vscroll { display: flex; flex-direction: column; align-items: center; justify-content: space-between; width: 16px; padding: 5px 0; background: #4b4b4b; color: #999; }
.status { display: flex; flex: none; align-items: stretch; height: 17px; padding-left: 4px; border-top: 1px solid #565656; background: #4b4b4b; }
.status input { padding: 0 2px; border-left: 1px solid #606060; background: #424242; color: #fff; font: 10px/14px "DejaVu Sans Mono", monospace; }
.zoomin { width: 50px; }
.pagein { width: 41px; }
.sdd { width: 18px; border: solid #606060; border-width: 0 1px; color: #eee; }
.nav { display: flex; align-items: center; justify-content: center; gap: 8px; width: 42px; background: #535353; }
.dim svg { fill: #777; }
.stool { width: 200px; border-left: 1px solid #484848; background: #535353; color: #ccc; text-align: center; line-height: 18px; }
.splay { width: 18px; border-left: 2px solid #484848; background: #535353; }
.hscroll { display: flex; flex: 1; align-items: center; justify-content: space-between; padding: 0 22px 0 6px; color: #999; }
.hscroll i { width: 26px; height: 14px; border-radius: 7px; background: #666; }

/* floating symbols panel */
.symbols { position: absolute; top: 341px; right: -1px; width: 241px; border: 1px solid #383838; border-top: 4px solid #343434; background: #535353; }
.symtabs { display: flex; height: 27px; border-bottom: 1px solid #383838; background: #424242; color: #aaa; }
.symtabs button { width: 42px; border-right: 1px solid #383838; }
.symtabs .on { height: 27px; background: #535353; color: #fff; }
.symctl { display: flex; align-items: center; gap: 7px; margin-left: auto; padding-right: 5px; color: #ddd; }
.symctl i { width: 1px; height: 11px; background: #aaa; }
.symlist { display: flex; gap: 1px; height: 203px; margin: 6px 5px 0; border: 1px solid #5e5e5e; }
.symlist button { width: 32px; height: 32px; background: #e2e2e2; }
.symlist svg { width: 32px; height: 32px; }
.symfoot { display: flex; align-items: center; justify-content: space-between; height: 19px; padding: 0 32px 0 10px; }
.symacts { display: flex; gap: 14px; }
.symgrip { display: flex; justify-content: center; height: 8px; padding-top: 1px; border-top: 2px solid #383838; }

/* right side */
.right { display: flex; flex: none; flex-direction: column; width: 355px; border-left: 3px double #383838; }
.strips { display: flex; }
.dockstrip { width: 100px; padding: 0 5px; }
.propstrip { flex: 1; padding: 0 5px; }
.panes { display: flex; flex: 1; min-height: 0; }
.dock { flex: none; width: 102px; border-right: 3px double #383838; }
.dgroup { position: relative; padding: 9px 4px 3px; border-bottom: 1px solid #383838; }
.dgroup .grip { position: absolute; left: 40px; top: 3px; }
.dgroup button { justify-content: flex-start; gap: 8px; width: 91px; height: 24px; margin: 2px 0; padding-left: 4px; border: 1px solid transparent; border-radius: 3px; color: #f0f0f0; }
.dgroup button + button { margin-top: 4px; }
.dgroup .on { border-color: #5c5c5c; background: #383838; }
.dgroup svg { width: 20px; height: 20px; }
.gA { font: bold 18px "Open Sans", sans-serif; }

.props { flex: 1; min-width: 0; }
.ptabs { display: flex; height: 27px; background: #424242; color: #aaa; box-shadow: inset 0 -1px #383838; }
.ptabs button { padding: 0 8px 0 9px; border-right: 1px solid #383838; }
.ptabs button:nth-child(2) { padding-right: 17px; }
.ptabs .on { background: #535353; color: #fff; }
.psec { position: relative; padding: 0 10px; border-bottom: 2px solid #494949; color: #ccc; font-size: 10px; line-height: 14px; }
.psec h2 { font-weight: bold; color: #b8b8b8; }
.objtype { height: 34px; padding-top: 10px; }
.xform { height: 131px; padding-top: 7px; }
.look { height: 165px; padding-top: 7px; }
.quick { padding-top: 11px; border: 0; }
.xgrid { display: grid; grid-template-columns: 20px 26px 56px 36px 56px 36px; grid-auto-rows: 21px; row-gap: 5px; align-items: center; margin-top: 9px; }
.xgrid label { display: flex; justify-content: flex-end; padding-right: 3px; white-space: nowrap; }
.xgrid > input { width: 56px; height: 21px; padding: 0 3px; border: 1px solid #606060; border-radius: 3px; background: #454545; color: #fff; font: 10px/14px "DejaVu Sans Mono", monospace; }
.mono { font-family: "DejaVu Sans Mono", monospace; }
.refpt { grid-row: 1 / 3; }
.link { grid-row: 1 / 3; grid-column: 6; justify-self: center; }
.xgrid label[for="fa"] { grid-column: 1 / 3; }
.angle input { width: 37px; }
.flips { display: flex; grid-column: 4 / 6; gap: 16px; justify-content: flex-end; padding-right: 9px; }
.dots { position: absolute; right: 13px; bottom: 10px; }
.lrow { display: flex; align-items: center; height: 29px; }
.look h2 { margin-bottom: 3px; }
.psw { width: 18px; flex: none; }
.lrow > span, .lrow > .dotted { margin-left: 12px; font-weight: bold; }
.lrow .combo { position: absolute; left: 89px; }
.fx { padding-left: 5px; color: #bbb; font: italic 13px/18px "Open Sans", sans-serif; align-items: flex-end; }
.fx svg { margin-bottom: 3px; }
.qgrid { display: grid; grid-template-columns: 100px 100px; grid-auto-rows: 21px; gap: 10px; margin-top: 8px; }
.qgrid button { border: 1px solid #767676; border-radius: 3px; color: #f0f0f0; font-weight: bold; }
.wide { grid-column: 1 / 3; }

.deer { position: absolute; right: 56px; bottom: 26px; display: flex; flex-direction: column; align-items: center; width: 50px; height: 50px; padding-top: 9px; border: 2px solid #3a8ee6; border-radius: 50%; background: #fff; box-shadow: inset 0 0 0 2px #fff, inset 0 0 0 3px #333; color: #000; font: bold 7px/9px "Noto Sans CJK SC", sans-serif; }
```
